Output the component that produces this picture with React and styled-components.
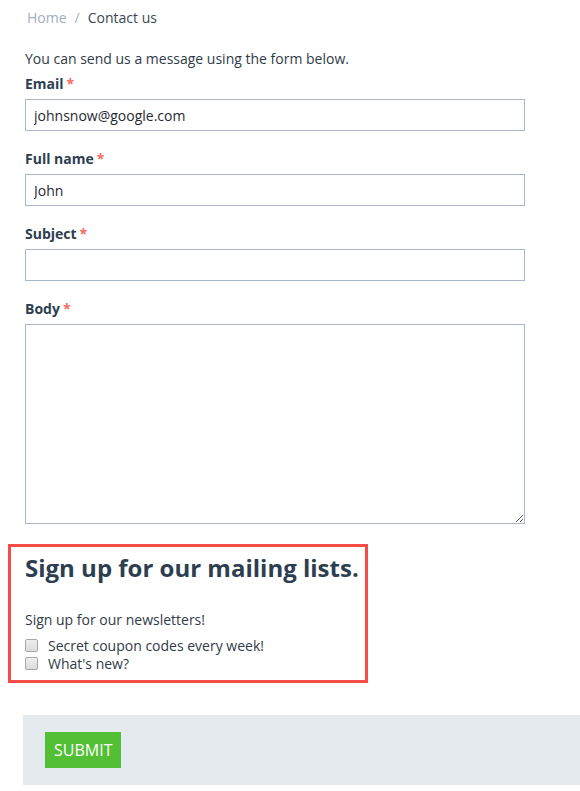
import React from 'react';
import styled, { createGlobalStyle } from 'styled-components';

const GlobalStyle = createGlobalStyle`
  html, body {
    margin: 0;
    padding: 0;
    background: #fff;
    font-family: 'Open Sans', 'Noto Sans', sans-serif;
    font-size: 14px;
    color: #2f3b48;
    overflow-x: hidden;
  }
  * { box-sizing: border-box; }
`;

const Page = styled.div`
  padding-top: 8px;
  padding-bottom: 6px;
`;

const Breadcrumb = styled.nav`
  display: flex;
  gap: 8px;
  padding-left: 27px;
  line-height: 20px;
  font-size: 14px;
`;

const Crumb = styled.span`
  color: ${props => props.active ? '#3a4651' : '#a3afbd'};
`;

const Content = styled.div`
  padding-left: 25px;
  width: 524px;
`;

const Intro = styled.p`
  margin: 21px 0 4px;
  line-height: 20px;
`;

const Field = styled.div`
  margin-bottom: 17px;
`;

const Label = styled.label`
  display: block;
  font-weight: 700;
  line-height: 20px;
  padding-top: 1px;
  margin-bottom: 5px;
  color: #2d3e50;
`;

const Required = styled.span`
  color: #f36b5f;
  margin-left: 3px;
`;

const TextInput = styled.input`
  display: block;
  width: 500px;
  height: 32px;
  padding: 0 8px;
  border: 1px solid #a9b8c8;
  border-radius: 0;
  font-family: inherit;
  font-size: 14px;
  color: #1f2933;
  outline: none;
`;

const TextArea = styled.textarea`
  display: block;
  width: 500px;
  height: 200px;
  padding: 6px 8px;
  border: 1px solid #a9b8c8;
  border-radius: 0;
  font-family: inherit;
  font-size: 14px;
  outline: none;
`;

const Newsletter = styled.section`
  margin: 20px 0 0 8px;
  width: 360px;
  border: 3px solid #f44c47;
  padding: 5px 14px 8px;
`;

const Heading = styled.h2`
  margin: 0 0 26px;
  font-size: 24px;
  line-height: 32px;
  font-weight: 700;
  white-space: nowrap;
  color: #2d3e50;
`;

const Lead = styled.p`
  margin: 0 0 6px;
  line-height: 20px;
`;

const CheckRow = styled.label`
  display: flex;
  align-items: center;
  height: 18px;
  gap: 10px;
  color: #2f3b48;
`;

const Check = styled.input`
  appearance: none;
  margin: 0;
  width: 13px;
  height: 13px;
  border: 1px solid #a6a6a6;
  border-radius: 2px;
  background: linear-gradient(#eeeeee, #dcdcdc);
`;

const Actions = styled.div`
  margin: 32px 0 0 23px;
  background: #e5eaef;
  padding: 17px 22px;
`;

const SubmitButton = styled.button`
  height: 36px;
  padding: 0 9px;
  border: none;
  border-radius: 0;
  background: #52bf34;
  color: #fff;
  font-family: inherit;
  font-size: 16px;
  cursor: pointer;
`;

const fields = [
  { label: 'Email', value: 'johnsnow@google.com' },
  { label: 'Full name', value: 'John' },
  { label: 'Subject', value: '' },
];

export default function App() {
  return (
    <Page>
      <GlobalStyle />
      <Breadcrumb>
        <Crumb>Home</Crumb>
        <Crumb>/</Crumb>
        <Crumb active>Contact us</Crumb>
      </Breadcrumb>
      <Content>
        <Intro>You can send us a message using the form below.</Intro>
        {fields.map(f => (
          <Field key={f.label}>
            <Label>{f.label}<Required>*</Required></Label>
            <TextInput defaultValue={f.value} />
          </Field>
        ))}
        <Field>
          <Label>Body<Required>*</Required></Label>
          <TextArea />
        </Field>
      </Content>
      <Newsletter>
        <Heading>Sign up for our mailing lists.</Heading>
        <Lead>Sign up for our newsletters!</Lead>
        <CheckRow><Check type="checkbox" />Secret coupon codes every week!</CheckRow>
        <CheckRow><Check type="checkbox" />What's new?</CheckRow>
      </Newsletter>
      <Actions>
        <SubmitButton>SUBMIT</SubmitButton>
      </Actions>
    </Page>
  );
}
